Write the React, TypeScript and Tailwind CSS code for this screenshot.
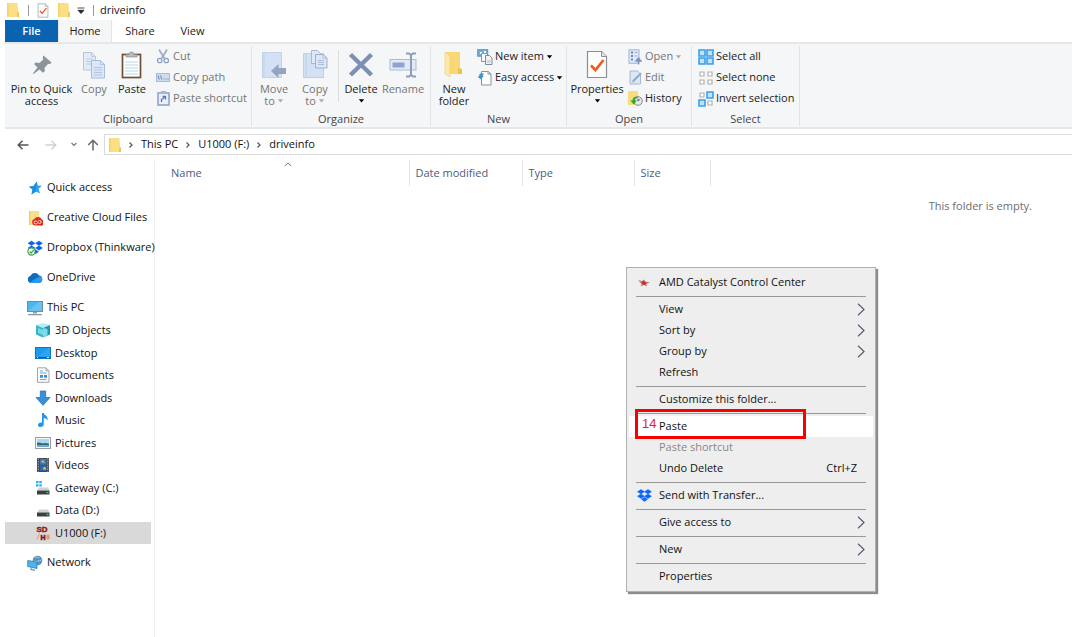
import type { ReactNode } from "react";

type IconProps = { children: ReactNode; w?: number; h?: number };

const Svg = ({ children, w = 16, h = 16 }: IconProps) => (
    <svg width={w} height={h} viewBox={`0 0 ${w} ${h}`} fill="none" className="shrink-0" aria-hidden="true">
        {children}
    </svg>
);

/* ---------- Shared glyphs ---------- */

const FolderIcon = () => (
    <Svg w={14} h={14}>
        <path d="M1 0h10.500l.5 9 1 .5V14H1z" fill="#fbdf85" />
        <path d="M1 0h1.500v14H1z" fill="#f6d069" />
        <path d="M11 9.500h2V14h-2z" fill="#efc65a" />
    </Svg>
);

const DropboxIcon = () => (
    <Svg w={15} h={13}>
        <path
            d="M4 .5l3.500 2.200L4 4.900.5 2.700zM11 .5l3.500 2.200L11 4.900 7.500 2.700zM4 5l3.500 2.200L4 9.400.5 7.200zM11 5l3.500 2.200L11 9.400 7.500 7.200zM7.500 8.300l3 2-3 2.200-3-2.200z"
            fill="#0a66ff"
            stroke="#0a66ff"
            strokeWidth=".5"
        />
    </Svg>
);

const Caret = () => (
    <svg width="7" height="4" viewBox="0 0 7 4" className="shrink-0" aria-hidden="true">
        <path d="M.8.3h5.400L3.500 3.400z" fill="currentColor" />
    </svg>
);

const Crumb = () => (
    <svg width="6" height="8" viewBox="0 0 6 8" fill="none" className="shrink-0" aria-hidden="true">
        <path d="M1.500 1.500L4 4 1.500 6.500" stroke="#555" strokeWidth="1.200" />
    </svg>
);

/* ---------- Ribbon icons ---------- */

const PinIcon = () => (
    <Svg w={20} h={20}>
        <path d="M11.500.5l8 7-1.700 1.800-1.600-.5-3.600 4 .2 3.500-1.800 1.500-3.600-3.400L1.500 19 1 18.300l4.500-5.700L2 9l1.800-1.600 3.800.5 3.800-3.600-.8-1.900z" fill="#8b939b" />
    </Svg>
);

const CopyIcon = () => (
    <Svg w={24} h={28}>
        <path d="M1.500 1.500h8l4 4V19h-12z" fill="#e3ebf7" stroke="#b6c5df" />
        <path d="M9.500 1.500v4h4M4 8h7M4 10.500h5M4 13h5" stroke="#bccae2" />
        <path d="M9.500 9.500h9l4 4V27h-13z" fill="#dbe6f6" stroke="#a9bbdb" />
        <path d="M18.500 9.500v4h4M12 16.500h8M12 19h8M12 21.500h8M12 24h8" stroke="#b3c4e2" />
    </Svg>
);

const PasteIcon = () => (
    <Svg w={22} h={28}>
        <rect x="1.500" y="3.500" width="18" height="23" fill="#fff" stroke="#6e5037" strokeWidth="1.700" />
        <path d="M4 11h13M4 14h13M4 17h13M4 20h13M4 23h13" stroke="#cbe6f1" strokeWidth="1.400" />
        <path d="M5 6V3.500h3C8.200 1.500 9 1 10.500 1s2.300.5 2.500 2.500h3V6z" fill="#b9bcbf" stroke="#85898c" strokeWidth=".7" />
    </Svg>
);

const CutIcon = () => (
    <Svg w={14} h={15}>
        <path d="M3 .5l5.500 9M11 .5l-5.500 9" stroke="#9daac3" strokeWidth="1.700" />
        <circle cx="3.700" cy="11.500" r="2.200" stroke="#8fa2c6" strokeWidth="1.300" />
        <circle cx="10.300" cy="11.500" r="2.200" stroke="#8fa2c6" strokeWidth="1.300" />
    </Svg>
);

const CopyPathIcon = () => (
    <Svg w={14} h={9}>
        <rect x=".5" y=".5" width="13" height="8" fill="#cfdbef" stroke="#a9bad8" />
        <path d="M2 2.500l1.300 4M4.500 2.500l1.300 4M7.500 6h1M9.500 6h1M11.500 6h1" stroke="#6f86b4" />
    </Svg>
);

const PasteShortcutIcon = () => (
    <Svg w={13} h={15}>
        <rect x="1" y="2" width="11" height="12" fill="#eaf0fa" stroke="#8a9fc7" strokeWidth="1.500" />
        <path d="M4 0h5v3H4z" fill="#a6b5d2" />
        <path d="M4.500 11V8.500l3-2M5.500 5.500h3v3" stroke="#5c78b2" strokeWidth="1.300" />
    </Svg>
);

const MoveToIcon = () => (
    <Svg w={26} h={28}>
        <path d="M1 1h20v26H1z" fill="#d4e0f3" />
        <path d="M1.500 1.500h19v25h-19z" stroke="#c3d2ea" />
        <path d="M3 1v26" stroke="#c3d2ea" />
        <path d="M10 20l7.500-7v4H25v6h-7.500v4z" fill="#94a5c4" />
    </Svg>
);

const CopyToIcon = () => (
    <Svg w={26} h={29}>
        <path d="M1 3h21v25H1z" fill="#d4e0f3" />
        <path d="M1.500 3.500h20v24h-20zM4 3v25" stroke="#c0cfe9" />
        <path d="M9.500.5h6l3 3v10h-9z" fill="#dfe8f6" stroke="#a8b9d8" />
        <path d="M13.500 4.500h8l3.500 3.500v10H13.500z" fill="#dce6f5" stroke="#9cafd2" />
        <path d="M21 4.500V8h4M16 10.500h6M16 12.500h6M16 14.500h6" stroke="#adbeda" />
    </Svg>
);

const DeleteIcon = () => (
    <Svg w={26} h={26}>
        <path d="M2.500 2.500L23.500 23M23.500 2.500L2.500 23" stroke="#7d90b3" strokeWidth="4.400" />
    </Svg>
);

const RenameIcon = () => (
    <Svg w={28} h={26}>
        <rect x="1" y="7.500" width="26" height="10.500" fill="#e2eaf7" stroke="#a9bbdb" />
        <rect x="3.500" y="10.500" width="12" height="5" fill="#8fa4ca" />
        <path d="M17 1.500h3l2 1.500 2-1.500h3M22 3v20M17 24.500h3l2-1.500 2 1.500h3" stroke="#8a9dbf" strokeWidth="2" />
    </Svg>
);

const NewFolderIcon = () => (
    <Svg w={20} h={27}>
        <path d="M1 1h15v16l2 1.500V23H1z" fill="#f9d775" />
        <path d="M16 17l2 1.500V23h-4v-5z" fill="#edc052" />
        <path d="M1 1l5 4v21l-5-3z" fill="#fce9a6" stroke="#f2cf6b" strokeWidth=".6" />
    </Svg>
);

const NewItemIcon = () => (
    <Svg w={16} h={16}>
        <rect x=".7" y=".7" width="10" height="6.500" fill="#6ab3dc" stroke="#6c8ea5" />
        <path d="M3 3h2v2H3zM7 2h2v2H7z" fill="#fff" />
        <path d="M4.500 4.500h6v8h-6z" fill="#f6f9fb" stroke="#8d9499" />
        <path d="M8.500 6.500h4l2.500 2.500v6.500H8.500z" fill="#f8efe9" stroke="#858b90" />
        <path d="M10 11h3.500v3H10z" fill="#c5d8e8" />
    </Svg>
);

const EasyAccessIcon = () => (
    <Svg w={16} h={16}>
        <path d="M4.500 1.500h7l2.500 2.500v11H4.500z" fill="#fff" stroke="#8d9296" />
        <path d="M11 1.500V4h3" stroke="#8d9296" />
        <path d="M1 8l2-4.500H7L5.500 6H7L2.500 10l.7-2z" fill="#3c91cf" />
    </Svg>
);

const PropertiesIcon = ({ small = false }) => (
    <svg width={small ? 12 : 22} height={small ? 15 : 29} viewBox="0 0 22 29" fill="none" className="shrink-0" aria-hidden="true">
        <path d="M1.500 1.500h14l5 5v21h-19z" fill="#fdfdfd" stroke="#8c8f91" strokeWidth="1.200" />
        <path d="M15.500 1.500v5h5" fill="#e6e6e6" stroke="#8c8f91" />
        <path d="M5 15.500l4.500 4.500 8-10" stroke="#ee5a1c" strokeWidth="2.600" />
    </svg>
);

const OpenIcon = () => (
    <Svg w={14} h={16}>
        <rect x="1" y=".8" width="10" height="13.500" fill="#dfe8f6" stroke="#a2b4d5" />
        <path d="M3 3.500h2M3 7h2M3 10.500h2" stroke="#6f88b9" strokeWidth="1.800" />
        <path d="M6.500 3.500h3M6.500 7h3" stroke="#a2b4d5" />
        <path d="M10.500 15.500V11M8 12l2.500-3L13 12z" stroke="#7b92bf" strokeWidth="1.300" fill="#7b92bf" />
    </Svg>
);

const EditIcon = () => (
    <Svg w={13} h={15}>
        <path d="M1 1h7.500L11.500 4v10H1z" fill="#dce6f5" stroke="#a6b8d7" />
        <path d="M3 12.500l.8-2.500L11.500 2.500l1.200 1.200-7.700 8z" fill="#90a5cb" />
    </Svg>
);

const HistoryIcon = () => (
    <Svg w={15} h={15}>
        <path d="M1 0h9l.5 8V14H0V1z" fill="#f9dc7c" />
        <circle cx="10" cy="10" r="4.300" fill="#e6e8ea" stroke="#85898c" />
        <path d="M10 7.500V10l1.800-1.500" stroke="#555" />
        <path d="M9.500 5.500C6 5.500 4.500 7 4.500 9.500H2.300l3.500 4 3.200-4H7c0-1.500.8-2.400 2.500-2.400z" fill="#2daa3a" />
    </Svg>
);

const SelectAllIcon = () => (
    <Svg w={16} h={16}>
        <path d="M1 1h6v6H1zM9 1h6v6H9zM1 9h6v6H1zM9 9h6v6H9z" fill="#bfe3fc" stroke="#3c9fe8" strokeWidth="1.600" />
    </Svg>
);

const SelectNoneIcon = () => (
    <Svg w={16} h={16}>
        <path d="M2 2h4v4H2zM10 2h4v4h-4zM2 10h4v4H2zM10 10h4v4h-4z" fill="#fff" stroke="#b0b0b0" strokeWidth="1.200" />
    </Svg>
);

const InvertIcon = () => (
    <Svg w={16} h={16}>
        <path d="M2 2h4v4H2zM10 10h4v4h-4z" fill="#fff" stroke="#b0b0b0" strokeWidth="1.200" />
        <path d="M9 1h6v6H9zM1 9h6v6H1z" fill="#bfe3fc" stroke="#3c9fe8" strokeWidth="1.600" />
    </Svg>
);

/* ---------- Navigation icons ---------- */

const StarIcon = () => (
    <Svg>
        <path d="M9.800 1.500l1 4 4.200.2-3.400 3.100 1.400 4.700-4.100-2.100L4.500 14.500l1-5L2 6.700l4.500-.6z" fill="#35a2ea" />
        <path d="M9.800 1.500l-.9 9.900L4.500 14.500l1-5L2 6.700l4.500-.6z" fill="#1f8ddb" />
    </Svg>
);

const CreativeCloudIcon = () => (
    <Svg>
        <path d="M2 1h10l.5 6v8H2z" fill="#fbe08b" />
        <path d="M2 1h1.500v14H2z" fill="#f4cd62" />
        <path d="M8 15.500a3.300 3.300 0 01-.7-6.400A4.300 4.300 0 0115 9.800a3 3 0 01-2 5.700z" fill="#da2b1e" />
        <path d="M10.500 13.500L8.700 14a1.600 1.600 0 010-3.200c1.600 0 2 2.700 4 2.700a1.500 1.500 0 000-3l-1.500.5" stroke="#fff" strokeWidth=".8" />
    </Svg>
);

const DropboxSyncedIcon = () => (
    <Svg>
        <path d="M4.500 1L8 3.200 4.500 5.400 1 3.200zM12 1l3.500 2.200L12 5.400 8.500 3.200zM12 5.800L15.500 8 12 10.200 8.500 8zM8.200 9.500l3.300 2.200-3 2-3-2zM4.500 5.800L8 8l-3.500 2.200L1 8z" fill="#0b62f0" stroke="#0b62f0" strokeWidth=".5" />
        <circle cx="4.500" cy="11.500" r="3.600" fill="#fff" stroke="#44a044" strokeWidth="1.200" />
        <path d="M2.700 11.500l1.500 1.600 2.400-3" stroke="#44a044" strokeWidth="1.300" />
    </Svg>
);

const OneDriveIcon = () => (
    <Svg>
        <path d="M4 13a3.600 3.600 0 01-.6-7A4.800 4.800 0 0112 5.500a3.800 3.800 0 01.3 7.500z" fill="#0f6cbd" />
        <path d="M3 12.500C5 11 8 8.500 13.500 6.300A3.700 3.700 0 0112.300 13H4z" fill="#2a9be8" />
    </Svg>
);

const ThisPcIcon = () => (
    <Svg>
        <rect x=".5" y="1.500" width="15" height="10" fill="#4fb6ee" stroke="#6f8da0" />
        <path d="M1 11L12 2h3v9z" fill="#7ccaf5" opacity=".6" />
        <path d="M6 12h4v1.500H6z" fill="#93a1ab" />
        <path d="M1 14h14v1.300H1z" fill="#8b9aa5" />
    </Svg>
);

const ObjectsIcon = () => (
    <Svg>
        <path d="M1 3l7-2 7 2-7 3z" fill="#b8eef3" />
        <path d="M1 3l7 3v9.500L1 12.500z" fill="#35b5c8" />
        <path d="M15 3L8 6v9.500l7-3z" fill="#1f94ac" />
        <path d="M8 6l4.500 1v6L8 15.500z" fill="#7fdbe6" />
        <path d="M3 6l5 2v5L3 11z" fill="#79d8e3" />
    </Svg>
);

const DesktopIcon = () => (
    <Svg>
        <rect x=".5" y="2.500" width="15" height="11" fill="#1b9bf0" stroke="#1674bf" />
        <path d="M1 13L13 3h2v8.500H1z" fill="#3eb0f8" opacity=".5" />
        <path d="M1 12.500h14" stroke="#0f5e9f" />
        <path d="M2 12.500h1M12 12.500h2" stroke="#cdeaff" />
    </Svg>
);

const DocumentsIcon = () => (
    <Svg>
        <path d="M2.500.8h8.500l3 3v11.500H2.500z" fill="#fafafa" stroke="#a3a6a9" />
        <path d="M11 .8v3h3" stroke="#a3a6a9" />
        <path d="M5 4h3M5 6h6.500M5 12.500h6.500" stroke="#6aaee0" strokeWidth="1.200" />
        <path d="M5 8h3v2.800H5zM9 8h3v2.800H9z" fill="#3d90cf" />
    </Svg>
);

const DownloadsIcon = () => (
    <Svg>
        <path d="M5.300 1h5.400v6.500H15L8 15.300 1 7.500h4.300z" fill="#3a8fdd" stroke="#2873b8" strokeWidth=".8" />
    </Svg>
);

const MusicIcon = () => (
    <Svg>
        <path d="M7 1h1.800c.3 2.500 5.200 3.300 3.500 7.500-.2-1.800-2-2.500-3.500-2.600v6.300c0 1.700-1.500 2.800-3.200 2.800-1.500 0-2.600-.8-2.600-2.100 0-1.700 2-2.900 4-2.200z" fill="#1d96ee" />
    </Svg>
);

const PicturesIcon = () => (
    <Svg>
        <rect x=".5" y="2.500" width="15" height="11" fill="#f7f7f7" stroke="#9a9ea1" />
        <path d="M2 4h12v4H2z" fill="#a9d8f4" />
        <path d="M2 8c3-1.500 5 1 7 .2 2-.5 3.500 0 5 .3v2H2z" fill="#3f6a63" />
        <path d="M2 10h12v2H2z" fill="#6fa9d8" />
    </Svg>
);

const VideosIcon = () => (
    <Svg>
        <path d="M2 1h12v14H2z" fill="#46494e" />
        <path d="M5 2h6.500v5.700H5z" fill="#3478c9" />
        <path d="M5 8.500h6.500V14H5z" fill="#2c65ad" />
        <path d="M6 5l2-2 2 3zM8 11l2-1.500 1.500 3H8z" fill="#e8bd3c" />
        <path d="M3.300 1.500v13M12.800 1.500v13" stroke="#c3c7ca" strokeDasharray="1.200 1.300" />
    </Svg>
);

const DriveIcon = ({ system = false }) => (
    <Svg>
        {system && <path d="M1 1h2.500v2.300H1zM4.300 1h2.500v2.300H4.300zM1 4.200h2.500v2.300H1zM4.300 4.200h2.500v2.300H4.300z" fill="#29b0ee" />}
        <path d="M4 7.500h9l1.500 3h-12z" fill="#cfd2d4" />
        <path d="M2 10.500h12.500v4H2z" fill="#3c3f42" />
        <path d="M11.500 12.500h2" stroke="#49d267" strokeWidth="1.200" />
    </Svg>
);

const SdIcon = () => (
    <Svg>
        <text x="1.500" y="6.800" fontFamily="Liberation Sans" fontWeight="700" fontSize="8" fill="#8a1616" stroke="#8a1616" strokeWidth=".4">SD</text>
        <text x="5.500" y="14.500" fontFamily="Liberation Sans" fontWeight="700" fontSize="7" fill="#7c1414" stroke="#7c1414" strokeWidth=".5">H</text>
        <path d="M4.500 8.500l-2.500 6M11 12h4M13 9v6M11.500 10l3 4M14.500 10l-3 4" stroke="#f08a4a" strokeWidth=".9" />
    </Svg>
);

const NetworkIcon = () => (
    <Svg>
        <circle cx="10.500" cy="5.500" r="4.800" fill="#5793bd" />
        <path d="M8 2.500c2-1 3 0 4.500.5M7 6c2 1 5 0 7.500-1" stroke="#a8d1e8" />
        <path d="M.7 5.500L10 7v6.500L.7 11.500z" fill="#4cb4ee" stroke="#3a7ca8" strokeWidth=".8" />
        <path d="M4 12.500v2l4 .8" stroke="#7f97a6" strokeWidth="1.300" />
    </Svg>
);

const AmdIcon = () => (
    <Svg w={12} h={8}>
        <path d="M0 1l4 1 2-1.500 1.500 2L12 3.500 8.500 5l.5 2.500L6 6 2.500 7.500 3.500 5z" fill="#b98781" />
        <path d="M3.500 3L6 2l2.500 2L7 6 4 5z" fill="#d9271d" />
    </Svg>
);

/* ---------- Data ---------- */

const topNav = [
    { label: "Quick access", icon: <StarIcon /> },
    { label: "Creative Cloud Files", icon: <CreativeCloudIcon /> },
    { label: "Dropbox (Thinkware)", icon: <DropboxSyncedIcon /> },
    { label: "OneDrive", icon: <OneDriveIcon /> },
    { label: "This PC", icon: <ThisPcIcon /> },
];

const pcNav = [
    { label: "3D Objects", icon: <ObjectsIcon /> },
    { label: "Desktop", icon: <DesktopIcon /> },
    { label: "Documents", icon: <DocumentsIcon /> },
    { label: "Downloads", icon: <DownloadsIcon /> },
    { label: "Music", icon: <MusicIcon /> },
    { label: "Pictures", icon: <PicturesIcon /> },
    { label: "Videos", icon: <VideosIcon /> },
    { label: "Gateway (C:)", icon: <DriveIcon system /> },
    { label: "Data (D:)", icon: <DriveIcon /> },
    { label: "U1000 (F:)", icon: <SdIcon />, selected: true },
];

type MenuEntry = { label: string; icon?: ReactNode; sub?: boolean; keys?: string; disabled?: boolean; active?: boolean };

const menuSections: MenuEntry[][] = [
    [{ label: "AMD Catalyst Control Center", icon: <AmdIcon /> }],
    [{ label: "View", sub: true }, { label: "Sort by", sub: true }, { label: "Group by", sub: true }, { label: "Refresh" }],
    [{ label: "Customize this folder..." }],
    [{ label: "Paste", active: true }, { label: "Paste shortcut", disabled: true }, { label: "Undo Delete", keys: "Ctrl+Z" }],
    [{ label: "Send with Transfer...", icon: <DropboxIcon /> }],
    [{ label: "Give access to", sub: true }],
    [{ label: "New", sub: true }],
    [{ label: "Properties" }],
];

/* ---------- Ribbon parts ---------- */

type BigProps = { icon: ReactNode; lines: string[]; width: string; disabled?: boolean; caret?: "inline" | "below" };

const BigButton = ({ icon, lines, width, disabled, caret }: BigProps) => (
    <button disabled={disabled} className={`${width} flex shrink-0 flex-col items-center whitespace-nowrap leading-3 ${disabled ? "text-[#757575]" : "text-[#222]"}`}>
        <span className="flex h-[37px] items-center">{icon}</span>
        {lines.map((line, i) => (
            <span key={line} className="flex items-center gap-0.5">
                {line}
                {caret === "inline" && i === lines.length - 1 && <span className="text-[#aaa]"><Caret /></span>}
            </span>
        ))}
        {caret === "below" && <span className="pt-1 text-black"><Caret /></span>}
    </button>
);

type SmallProps = { icon: ReactNode; label: string; disabled?: boolean; caret?: boolean };

const SmallButton = ({ icon, label, disabled, caret }: SmallProps) => (
    <button disabled={disabled} className={`flex h-[21px] items-center whitespace-nowrap ${disabled ? "text-[#757575]" : "text-[#222]"}`}>
        <span className="mr-0.5 flex w-4 justify-center">{icon}</span>
        {label}
        {caret && <span className={`ml-0.5 ${disabled ? "text-[#aaa]" : "text-black"}`}><Caret /></span>}
    </button>
);

const Group = ({ title, width, children }: { title: string; width: string; children: ReactNode }) => (
    <section aria-label={title} className={`${width} flex shrink-0 flex-col border-r border-[#e0e2e4]`}>
        <div className="flex h-[67px] items-start">{children}</div>
        <div className="text-center leading-[14px] text-[#444]">{title}</div>
    </section>
);

const NavItem = ({ icon, label, child, selected }: { icon: ReactNode; label: string; child?: boolean; selected?: boolean }) => (
    <a
        href="#"
        className={`flex items-center gap-1 whitespace-nowrap ${child ? "flex-1 pl-[30px]" : "h-[23px] pl-[22px]"} ${selected ? "bg-[#d9d9d9]" : ""}`}
    >
        {icon}
        {label}
    </a>
);

const ContextMenu = () => (
    <div role="menu" className="absolute left-[626px] top-[267px] w-[250px] border border-[#b0b0b0] bg-[#eee] py-1 text-[#111] shadow-[2px_2px_1px_#8c8c8c]">
        {menuSections.map((section, s) => (
            <div key={s}>
                {s > 0 && <div className="mx-[9px] flex h-1.5 items-center"><div className="h-px w-full bg-[#999]" /></div>}
                {section.map((item) => (
                    <button
                        key={item.label}
                        role="menuitem"
                        disabled={item.disabled}
                        className={`mx-0.5 flex h-[21px] w-[244px] items-center pr-2 ${item.active ? "bg-white" : ""} ${item.disabled ? "text-[#888]" : ""}`}
                    >
                        <span className="flex w-[30px] justify-center">{item.icon}</span>
                        {item.label}
                        {item.keys && <span className="ml-auto pr-2">{item.keys}</span>}
                        {item.sub && (
                            <svg width="8" height="13" viewBox="0 0 8 13" fill="none" className="ml-auto" aria-hidden="true">
                                <path d="M1 .8l6 5.700-6 5.700" stroke="#555d70" strokeWidth="1.200" />
                            </svg>
                        )}
                    </button>
                ))}
            </div>
        ))}
        {/* Step marker */}
        <div className="absolute left-2 top-[141px] flex h-[30px] w-[171px] items-center border-3 border-[#f80000] pl-1 font-['Liberation_Sans'] text-[13px] text-[#e3242b]">
            14
        </div>
    </div>
);

export default function App() {
    return (
        <div className="relative flex min-h-screen flex-col overflow-hidden bg-white pl-[5px] pr-1.5 font-['Open_Sans','Noto_Sans',sans-serif] text-[11px] text-[#111]">
            {/* Title bar */}
            <header className="flex h-5 items-center pl-px">
                <FolderIcon />
                <span className="ml-2 h-[11px] w-px bg-[#999]" />
                <span className="ml-2"><PropertiesIcon small /></span>
                <span className="ml-2"><FolderIcon /></span>
                <svg width="8" height="7" viewBox="0 0 8 7" className="ml-1.5" aria-hidden="true">
                    <path d="M.5 1h7M1 3.300h6L4 6.500z" stroke="#222" strokeWidth=".8" fill="#222" />
                </svg>
                <span className="ml-2 h-[11px] w-px bg-[#999]" />
                <h1 className="ml-1.5">driveinfo</h1>
            </header>

            {/* Tabs */}
            <nav className="flex h-[22px] items-stretch text-center text-[#222]">
                <button className="w-[53px] bg-[#0a63b1] font-semibold text-white">File</button>
                <button className="w-[54px] border-x border-[#e3e4e5] bg-[#f5f6f7]">Home</button>
                <button className="w-[56px]">Share</button>
                <button className="w-[49px]">View</button>
            </nav>

            {/* Ribbon */}
            <div className="flex h-[87px] border-y-2 border-[#e6e7e8] bg-[#f5f6f7] pb-px pt-0.5">
                <Group title="Clipboard" width="w-[247px]">
                    <BigButton icon={<PinIcon />} lines={["Pin to Quick", "access"]} width="w-[73px]" />
                    <BigButton icon={<CopyIcon />} lines={["Copy"]} width="w-[32px]" disabled />
                    <BigButton icon={<PasteIcon />} lines={["Paste"]} width="w-[44px]" />
                    <div className="pl-px">
                        <SmallButton icon={<CutIcon />} label="Cut" disabled />
                        <SmallButton icon={<CopyPathIcon />} label="Copy path" disabled />
                        <SmallButton icon={<PasteShortcutIcon />} label="Paste shortcut" disabled />
                    </div>
                </Group>
                <Group title="Organize" width="w-[179px]">
                    <BigButton icon={<MoveToIcon />} lines={["Move", "to"]} width="w-[44px]" disabled caret="inline" />
                    <BigButton icon={<CopyToIcon />} lines={["Copy", "to"]} width="w-[38px]" disabled caret="inline" />
                    <span className="ml-1 mt-1 h-[52px] w-px bg-[#dcdee0]" />
                    <BigButton icon={<DeleteIcon />} lines={["Delete"]} width="w-[44px]" caret="below" />
                    <BigButton icon={<RenameIcon />} lines={["Rename"]} width="w-[40px]" disabled />
                </Group>
                <Group title="New" width="w-[136px]">
                    <BigButton icon={<NewFolderIcon />} lines={["New", "folder"]} width="w-[46px]" />
                    <div>
                        <SmallButton icon={<NewItemIcon />} label="New item" caret />
                        <SmallButton icon={<EasyAccessIcon />} label="Easy access" caret />
                    </div>
                </Group>
                <Group title="Open" width="w-[125px]">
                    <BigButton icon={<PropertiesIcon />} lines={["Properties"]} width="w-[60px]" caret="below" />
                    <div>
                        <SmallButton icon={<OpenIcon />} label="Open" disabled caret />
                        <SmallButton icon={<EditIcon />} label="Edit" disabled />
                        <SmallButton icon={<HistoryIcon />} label="History" />
                    </div>
                </Group>
                <Group title="Select" width="w-[108px]">
                    <div className="pl-1.5">
                        <SmallButton icon={<SelectAllIcon />} label="Select all" />
                        <SmallButton icon={<SelectNoneIcon />} label="Select none" />
                        <SmallButton icon={<InvertIcon />} label="Invert selection" />
                    </div>
                </Group>
            </div>

            {/* Address row */}
            <div className="flex h-[31px] items-center">
                <div className="flex w-[99px] items-center pl-3">
                    <button aria-label="Back">
                        <Svg w={12} h={10}><path d="M11.500 5H1.200M5.500.8L1.200 5l4.300 4.200" stroke="#555" strokeWidth="1.500" /></Svg>
                    </button>
                    <button aria-label="Forward" className="ml-4">
                        <Svg w={12} h={10}><path d="M.5 5h10.300M6.500.8L10.800 5 6.500 9.200" stroke="#d0d0d0" strokeWidth="1.300" /></Svg>
                    </button>
                    <button aria-label="Recent locations" className="ml-3.5">
                        <Svg w={6} h={5}><path d="M.5 1L3 3.500 5.500 1" stroke="#777" strokeWidth="1.200" /></Svg>
                    </button>
                    <button aria-label="Up" className="ml-2.5">
                        <Svg w={12} h={12}><path d="M6 11.500V1.200M1.200 6L6 1.200 10.800 6" stroke="#666" strokeWidth="1.500" /></Svg>
                    </button>
                </div>
                <div className="flex h-[21px] flex-1 items-center border border-r-0 border-[#dcdcdc] pl-[3px]">
                    <FolderIcon />
                    <span className="ml-1.5 flex items-center gap-[7px]">
                        <Crumb />
                        <a href="#">This PC</a>
                        <Crumb />
                        <a href="#">U1000 (F:)</a>
                        <Crumb />
                        <a href="#">driveinfo</a>
                    </span>
                </div>
            </div>

            <div className="flex flex-1">
                {/* Navigation pane */}
                <aside className="flex w-[150px] shrink-0 flex-col border-r border-[#f0f0f0] pr-[3px] pt-4">
                    <div className="flex flex-col gap-[7px]">
                        {topNav.map((item) => <NavItem key={item.label} {...item} />)}
                    </div>
                    <div className="flex h-[225px] flex-col">
                        {pcNav.map((item) => <NavItem key={item.label} {...item} child />)}
                    </div>
                    <div className="pt-[7px]">
                        <NavItem icon={<NetworkIcon />} label="Network" />
                    </div>
                </aside>

                {/* File list */}
                <main className="relative flex-1">
                    <svg width="8" height="5" viewBox="0 0 8 5" fill="none" className="absolute left-[129px] top-0.5" aria-hidden="true">
                        <path d="M.8 4L4 1l3.200 3" stroke="#777" />
                    </svg>
                    <table className="table-fixed border-collapse text-left text-[#4c607a]">
                        <thead>
                            <tr className="h-[26px]">
                                <th className="w-[254px] border-r border-[#e5e5e5] pl-4 font-normal">Name</th>
                                <th className="w-[113px] border-r border-[#e5e5e5] pl-1.5 font-normal">Date modified</th>
                                <th className="w-[112px] border-r border-[#e5e5e5] pl-1.5 font-normal">Type</th>
                                <th className="w-[76px] border-r border-[#e5e5e5] pl-1.5 font-normal">Size</th>
                            </tr>
                        </thead>
                    </table>
                    <p className="pr-10 pt-3 text-right text-[#6d6d6d]">This folder is empty.</p>
                </main>
            </div>
            <ContextMenu />
        </div>
    );
}
